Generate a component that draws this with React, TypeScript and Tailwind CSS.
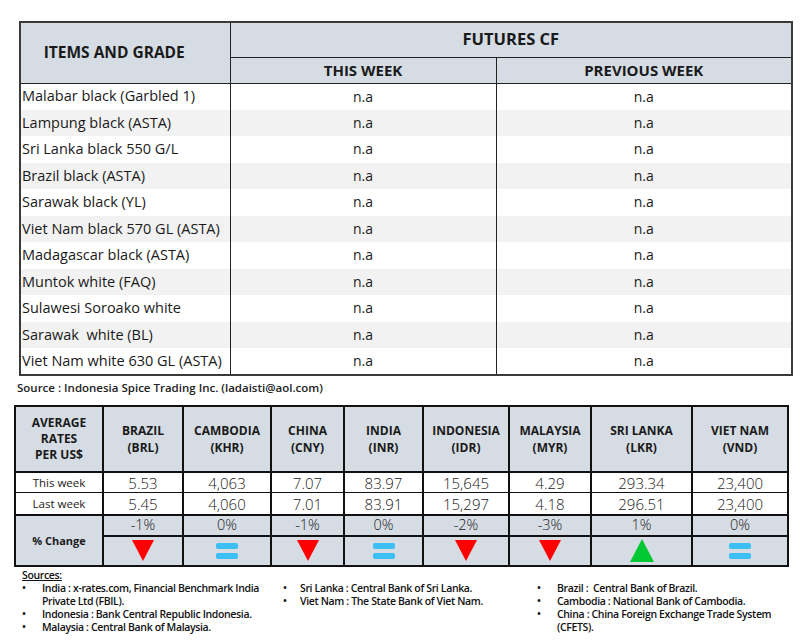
import React from 'react';

const items = [
  'Malabar black (Garbled 1)',
  'Lampung black (ASTA)',
  'Sri Lanka black 550 G/L',
  'Brazil black (ASTA)',
  'Sarawak black (YL)',
  'Viet Nam black 570 GL (ASTA)',
  'Madagascar black (ASTA)',
  'Muntok white (FAQ)',
  'Sulawesi Soroako white',
  'Sarawak  white (BL)',
  'Viet Nam white 630 GL (ASTA)',
];

type Trend = 'down' | 'up' | 'same';

const rates: { name: string; code: string; w: number; now: string; last: string; pct: string; trend: Trend }[] = [
  { name: 'BRAZIL', code: '(BRL)', w: 80, now: '5.53', last: '5.45', pct: '-1%', trend: 'down' },
  { name: 'CAMBODIA', code: '(KHR)', w: 88, now: '4,063', last: '4,060', pct: '0%', trend: 'same' },
  { name: 'CHINA', code: '(CNY)', w: 73, now: '7.07', last: '7.01', pct: '-1%', trend: 'down' },
  { name: 'INDIA', code: '(INR)', w: 79, now: '83.97', last: '83.91', pct: '0%', trend: 'same' },
  { name: 'INDONESIA', code: '(IDR)', w: 86, now: '15,645', last: '15,297', pct: '-2%', trend: 'down' },
  { name: 'MALAYSIA', code: '(MYR)', w: 82, now: '4.29', last: '4.18', pct: '-3%', trend: 'down' },
  { name: 'SRI LANKA', code: '(LKR)', w: 101, now: '293.34', last: '296.51', pct: '1%', trend: 'up' },
  { name: 'VIET NAM', code: '(VND)', w: 96, now: '23,400', last: '23,400', pct: '0%', trend: 'same' },
];

const TrendIcon = ({ trend }: { trend: Trend }) => {
  if (trend === 'down')
    return (
      <svg width="22" height="21" viewBox="0 0 22 21" className="mx-auto block">
        <polygon points="0,0 22,0 11,21" fill="#ff0000" />
      </svg>
    );
  if (trend === 'up')
    return (
      <svg width="24" height="23" viewBox="0 0 24 23" className="mx-auto block">
        <polygon points="12,0 24,23 0,23" fill="#00c832" />
      </svg>
    );
  return (
    <div className="mx-auto flex w-[22px] flex-col gap-[4px]">
      <div className="h-[6px] rounded-[2px] bg-[#3cbff5]" />
      <div className="h-[6px] rounded-[2px] bg-[#3cbff5]" />
    </div>
  );
};

const font = { fontFamily: '"Open Sans", "Noto Sans", sans-serif' };

const Bullet = ({ w, children }: { w: number; children: React.ReactNode }) => (
  <li className="flex">
    <span className="shrink-0" style={{ width: w }}>
      •
    </span>
    <span className="whitespace-nowrap">{children}</span>
  </li>
);

export default function App() {
  return (
    <div className="relative h-[644px] w-[800px] overflow-hidden bg-white text-[#1a1a1a]" style={font}>
      <table className="ml-[19px] mt-[21px] w-[772px] table-fixed border-collapse border-2 border-[#3a3a3a]">
        <colgroup>
          <col className="w-[210px]" />
          <col className="w-[266px]" />
          <col className="w-[296px]" />
        </colgroup>
        <thead>
          <tr className="h-[35px] bg-[#d6dce4]">
            <th rowSpan={2} className="border-r border-b border-[#222] pr-[22px] text-[15.5px] font-bold">
              ITEMS AND GRADE
            </th>
            <th colSpan={2} className="border-b border-[#222] text-[16.5px] font-bold">
              FUTURES CF
            </th>
          </tr>
          <tr className="h-[26px] bg-[#d6dce4]">
            <th className="border-r border-b border-[#222] text-[15px] font-bold">THIS WEEK</th>
            <th className="border-b border-[#222] text-[15px] font-bold">PREVIOUS WEEK</th>
          </tr>
        </thead>
        <tbody>
          {items.map((it, i) => (
            <tr key={i} className={`h-[26.5px] ${i % 2 === 1 ? 'bg-[#f2f2f2]' : 'bg-white'}`}>
              <td className="whitespace-pre border-r border-[#222] pl-[1px] text-[14.5px] leading-none">{it}</td>
              <td className="border-r border-[#222] text-center text-[14px] leading-none">n.a</td>
              <td className="text-center text-[14px] leading-none">n.a</td>
            </tr>
          ))}
        </tbody>
      </table>

      <div className="ml-[17px] mt-[4px] text-[11.5px] font-semibold leading-[16px] text-[#222]">
        Source : Indonesia Spice Trading Inc. (ladaisti@aol.com)
      </div>

      <table className="ml-[14px] mt-[9px] w-[773px] table-fixed border-collapse border-2 border-[#111]">
        <colgroup>
          <col className="w-[88px]" />
          {rates.map((r) => (
            <col key={r.name} style={{ width: r.w }} />
          ))}
        </colgroup>
        <thead>
          <tr className="h-[66px] bg-[#d6dce4]">
            <th className="border-2 border-[#111] text-[12px] font-bold leading-[16px]">
              AVERAGE
              <br />
              RATES
              <br />
              PER US$
            </th>
            {rates.map((r) => (
              <th key={r.name} className="border-2 border-[#111] text-[12px] font-bold leading-[17px]">
                {r.name}
                <br />
                {r.code}
              </th>
            ))}
          </tr>
        </thead>
        <tbody>
          <tr className="h-[21px] bg-white">
            <td className="border-x-2 border-b border-[#111] text-center text-[11.5px] leading-none">
              This week
            </td>
            {rates.map((r) => (
              <td key={r.name} className="border-x-2 border-b border-[#111] pt-[3px] text-center text-[15px] font-light leading-none">
                {r.now}
              </td>
            ))}
          </tr>
          <tr className="h-[22px] bg-white">
            <td className="border-x-2 border-b-2 border-[#111] text-center text-[11.5px] leading-none">
              Last week
            </td>
            {rates.map((r) => (
              <td key={r.name} className="border-x-2 border-b-2 border-[#111] pt-[3px] text-center text-[15px] font-light leading-none">
                {r.last}
              </td>
            ))}
          </tr>
          <tr className="h-[21px] bg-[#d6dce4]">
            <td rowSpan={2} className="border-2 border-[#111] text-center text-[11px] font-bold leading-none">
              % Change
            </td>
            {rates.map((r) => (
              <td key={r.name} className="border-x-2 border-b-2 border-[#111] text-center text-[14.5px] font-light leading-none">
                {r.pct}
              </td>
            ))}
          </tr>
          <tr className="h-[30px] bg-[#d6dce4]">
            {rates.map((r) => (
              <td key={r.name} className="border-2 border-[#111] align-middle">
                <TrendIcon trend={r.trend} />
              </td>
            ))}
          </tr>
        </tbody>
      </table>

      <div className="ml-[22px] mt-[2px] text-[10.5px] font-semibold leading-[13px] tracking-[-0.35px] text-[#111]">
        <div className="underline">Sources:</div>
        <div className="flex">
          <ul className="w-[261px] shrink-0">
            <Bullet w={20}>
              India : x-rates.com, Financial Benchmark India
              <br />
              Private Ltd (FBIL).
            </Bullet>
            <Bullet w={20}>Indonesia : Bank Central Republic Indonesia.</Bullet>
            <Bullet w={20}>Malaysia : Central Bank of Malaysia.</Bullet>
          </ul>
          <ul className="w-[254px] shrink-0">
            <Bullet w={17}>Sri Lanka : Central Bank of Sri Lanka.</Bullet>
            <Bullet w={17}>Viet Nam : The State Bank of Viet Nam.</Bullet>
          </ul>
          <ul className="shrink-0">
            <Bullet w={20}>Brazil :&nbsp; Central Bank of Brazil.</Bullet>
            <Bullet w={20}>Cambodia : National Bank of Cambodia.</Bullet>
            <Bullet w={20}>
              China : China Foreign Exchange Trade System
              <br />
              (CFETS).
            </Bullet>
          </ul>
        </div>
      </div>
    </div>
  );
}
